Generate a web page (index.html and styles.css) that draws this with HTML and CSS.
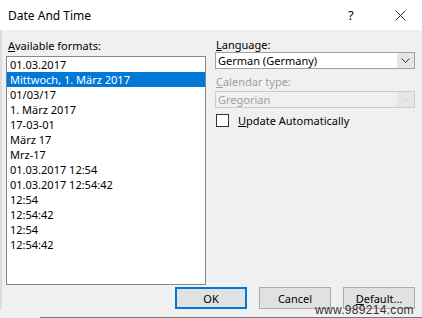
FILE: index.html
```html
<!DOCTYPE html>
<html>
<head>
    <meta charset="UTF-8">
    <title>Date And Time</title>
    <link rel="stylesheet" href="styles.css">
</head>
<body>
    <div class="window">
        <div class="titlebar">
            <span class="title">Date And Time</span>
            <span class="help">?</span>
            <span class="close">
                <svg width="11" height="11" viewBox="0 0 11 11">
                    <path d="M0.5 0.5 L10.5 10.5 M10.5 0.5 L0.5 10.5" stroke="#222" stroke-width="1" fill="none"/>
                </svg>
            </span>
        </div>

        <div class="content">
            <div class="columns">
                <div class="left-col">
                    <div class="label"><u>A</u>vailable formats:</div>
                    <ul class="listbox">
                        <li>01.03.2017</li>
                        <li class="selected">Mittwoch, 1. März 2017</li>
                        <li>01/03/17</li>
                        <li>1. März 2017</li>
                        <li>17-03-01</li>
                        <li>März 17</li>
                        <li>Mrz-17</li>
                        <li>01.03.2017 12:54</li>
                        <li>01.03.2017 12:54:42</li>
                        <li>12:54</li>
                        <li>12:54:42</li>
                        <li>12:54</li>
                        <li>12:54:42</li>
                    </ul>
                </div>

                <div class="right-col">
                    <div class="label"><u>L</u>anguage:</div>
                    <div class="combo">
                        <span class="combo-value">German (Germany)</span>
                        <span class="combo-arrow">
                            <svg width="9" height="5" viewBox="0 0 9 5"><path d="M0.5 0.5 L4.5 4.5 L8.5 0.5" stroke="#333" fill="none"/></svg>
                        </span>
                    </div>
                    <div class="label disabled"><u>C</u>alendar type:</div>
                    <div class="combo combo-disabled">
                        <span class="combo-value">Gregorian</span>
                        <span class="combo-arrow">
                            <svg width="9" height="5" viewBox="0 0 9 5"><path d="M0.5 0.5 L4.5 4.5 L8.5 0.5" stroke="#d0d0d0" fill="none"/></svg>
                        </span>
                    </div>
                    <label class="check-row">
                        <span class="checkbox"></span>
                        <span><u>U</u>pdate Automatically</span>
                    </label>
                </div>
            </div>

            <div class="buttons">
                <button class="btn btn-default">OK</button>
                <button class="btn">Cancel</button>
                <button class="btn"><u>D</u>efault...</button>
            </div>
        </div>

        <div class="watermark">www.989214.com</div>
        <div class="bottom-line"></div>
    </div>
</body>
</html>
```

FILE: styles.css
```css
body {
    margin: 0;
    font-family: "Noto Sans", "Open Sans", sans-serif;
    font-size: 11px;
    color: #000;
    background: #f0f0f0;
}

.window {
    position: relative;
    width: 422px;
    height: 318px;
    overflow: hidden;
    background: #f0f0f0;
}

.titlebar {
    height: 30px;
    background: #fff;
    display: flex;
    align-items: center;
    padding-left: 8px;
}

.title {
    flex-grow: 1;
    font-size: 12px;
    color: #000;
}

.help {
    width: 14px;
    font-size: 13px;
    margin-right: 33px;
}

.close {
    display: flex;
    margin-right: 16px;
}

.content {
    border-left: 2px solid #dcdcdc;
    padding: 0 7px 0 4px;
}

.columns {
    display: flex;
    gap: 9px;
}

.left-col {
    width: 200px;
}

.right-col {
    width: 200px;
    display: flex;
    flex-direction: column;
}

.label {
    line-height: 15px;
    padding: 8px 0 3px 2px;
}

.label.disabled {
    color: #a0a0a0;
    padding: 5px 0 2px 1px;
}

.right-col .label:first-child {
    padding: 7px 0 0 1px;
}

.listbox {
    list-style: none;
    margin: 0;
    padding: 0;
    height: 227px;
    background: #fff;
    border: 1px solid #828790;
}

.listbox li {
    height: 15px;
    line-height: 15px;
    padding-left: 3px;
    white-space: nowrap;
}

.listbox li.selected {
    background: #0078d7;
    color: #fff;
}

.combo {
    display: flex;
    height: 15px;
    border: 1px solid #a0a0a0;
    background: #fff;
}

.combo-value {
    flex-grow: 1;
    line-height: 15px;
    padding-left: 2px;
}

.combo-arrow {
    width: 17px;
    background: #e5e5e5;
    display: flex;
    align-items: center;
    justify-content: center;
}

.combo-disabled {
    background: #f0f0f0;
    border-color: #cccccc;
    color: #a0a0a0;
}

.combo-disabled .combo-arrow {
    background: #e6e6e6;
}

.check-row {
    display: flex;
    align-items: center;
    gap: 9px;
    margin-top: 5px;
    padding-left: 1px;
}

.checkbox {
    width: 11px;
    height: 11px;
    border: 1px solid #333;
    background: #fff;
}

.buttons {
    display: flex;
    justify-content: flex-end;
    gap: 12px;
    margin-top: 2px;
}

.btn {
    width: 72px;
    height: 22px;
    padding: 0;
    font-family: "Noto Sans", "Open Sans", sans-serif;
    font-size: 11px;
    color: #000;
    background: #e1e1e1;
    border: 1px solid #adadad;
}

.btn-default {
    border: 2px solid #0078d7;
}

.watermark {
    position: absolute;
    left: 315px;
    top: 303px;
    font-family: "Liberation Sans", Arial, sans-serif;
    font-size: 12px;
    color: #333;
    letter-spacing: 0.3px;
}

.bottom-line {
    position: absolute;
    left: 40px;
    right: 0;
    top: 317px;
    height: 1px;
    background: #777;
}
```
